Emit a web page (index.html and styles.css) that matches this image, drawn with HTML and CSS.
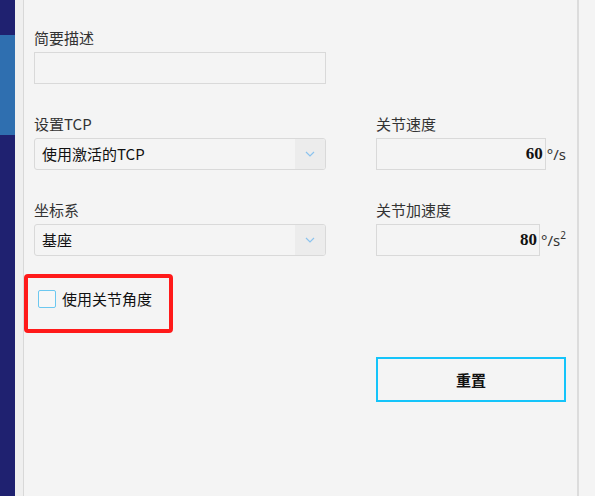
FILE: index.html
```html
<!DOCTYPE html>
<html lang="zh">
<head>
<meta charset="utf-8">
<link rel="stylesheet" href="styles.css">
</head>
<body>
<div class="app">
  <nav class="sidebar">
    <div class="sb-top"></div>
    <div class="sb-active"></div>
    <div class="sb-rest"></div>
  </nav>
  <div class="gutter"></div>
  <main class="panel">
    <div class="row">
      <div class="field left">
        <label class="lbl">简要描述</label>
        <div class="input"></div>
      </div>
    </div>
    <div class="row gap">
      <div class="field left">
        <label class="lbl">设置TCP</label>
        <div class="select"><span class="sel-text">使用激活的TCP</span><span class="sel-btn"><svg width="10" height="6" viewBox="0 0 10 6"><path d="M1 1 L5 5 L9 1" fill="none" stroke="#8cc3ee" stroke-width="1.2"/></svg></span></div>
      </div>
      <div class="field right">
        <label class="lbl">关节速度</label>
        <div class="num-wrap"><div class="num w172"><span class="val">60</span></div><span class="unit">°/s</span></div>
      </div>
    </div>
    <div class="row gap">
      <div class="field left">
        <label class="lbl">坐标系</label>
        <div class="select"><span class="sel-text">基座</span><span class="sel-btn"><svg width="10" height="6" viewBox="0 0 10 6"><path d="M1 1 L5 5 L9 1" fill="none" stroke="#8cc3ee" stroke-width="1.2"/></svg></span></div>
      </div>
      <div class="field right">
        <label class="lbl">关节加速度</label>
        <div class="num-wrap"><div class="num w166"><span class="val">80</span></div><span class="unit">°/s<sup>2</sup></span></div>
      </div>
    </div>
    <div class="highlight">
      <label class="check"><span class="box"></span><span class="check-text">使用关节角度</span></label>
    </div>
    <div class="actions">
      <button class="reset">重置</button>
    </div>
  </main>
  <div class="rborder"></div>
  <div class="rest"></div>
</div>
</body>
</html>
```
FILE: styles.css
```css
* { box-sizing: border-box; }
html, body { margin: 0; padding: 0; }
body {
  width: 595px; height: 496px; overflow: hidden;
  background: #f4f4f4;
  font-family: "Noto Sans CJK SC", "Noto Sans", sans-serif;
  color: #333;
}
.app { display: flex; height: 496px; }
.sidebar { width: 15px; display: flex; flex-direction: column; flex: none; }
.sb-top { height: 35px; background: #1f2170; }
.sb-active { height: 100px; background: #2f6fb0; }
.sb-rest { flex: 1; background: #1f2170; }
.gutter { width: 9px; flex: none; background: #efefef; border-right: 1px solid #d8d8d8; }
.panel { width: 553px; flex: none; padding: 28px 0 0 10px; }
.rborder { width: 2px; flex: none; background: #dcdcdc; }
.rest { flex: 1; background: #f4f4f4; }
.row { display: flex; gap: 50px; }
.row.gap { margin-top: 30px; }
.field { display: flex; flex-direction: column; }
.left { width: 292px; }
.right { width: 190px; }
.lbl { font-size: 15px; line-height: 20px; height: 20px; margin-bottom: 4px; color: #333; }
.input { height: 32px; border: 1px solid #d9d9d9; background: #f4f4f4; }
.select {
  height: 32px; border: 1px solid #d9d9d9; border-radius: 3px; background: #f4f4f4;
  display: flex; align-items: center; overflow: hidden;
}
.sel-text { flex: 1; padding-left: 7px; font-size: 15px; color: #111; line-height: 30px; }
.sel-btn { width: 30px; height: 100%; background: #ececec; display: flex; align-items: center; justify-content: center; }
.num-wrap { display: flex; align-items: center; }
.num {
  height: 32px; border: 1px solid #d9d9d9; background: #f4f4f4;
  display: flex; align-items: center; justify-content: flex-end; padding-right: 2px;
}
.w172 { width: 172px; }
.w166 { width: 166px; }
.val { font-family: "Liberation Serif", serif; font-weight: bold; font-size: 17px; color: #111; }
.unit { font-size: 15px; color: #333; margin-left: 1px; font-family: "Noto Sans", sans-serif; }
.unit sup { font-size: 10px; vertical-align: 7px; line-height: 0; }
.highlight {
  margin: 18px 0 0 -10px; width: 149px; height: 59px;
  border: 4px solid #ff1a1a; border-radius: 4px;
  padding: 12px 0 0 10px;
}
.check { display: flex; align-items: center; gap: 6px; }
.box { width: 18px; height: 18px; border: 1px solid #6cc8f0; border-radius: 2px; background: #f7f7f7; }
.check-text { font-size: 15px; color: #111; line-height: 18px; }
.actions { margin: 24px 0 0 342px; }
.reset {
  width: 190px; height: 45px; border: 2px solid #14c4fa; background: #f4f4f4;
  font-family: "Noto Sans CJK SC", sans-serif; font-size: 15px; font-weight: bold; color: #111;
  padding: 0; cursor: pointer;
}
```
